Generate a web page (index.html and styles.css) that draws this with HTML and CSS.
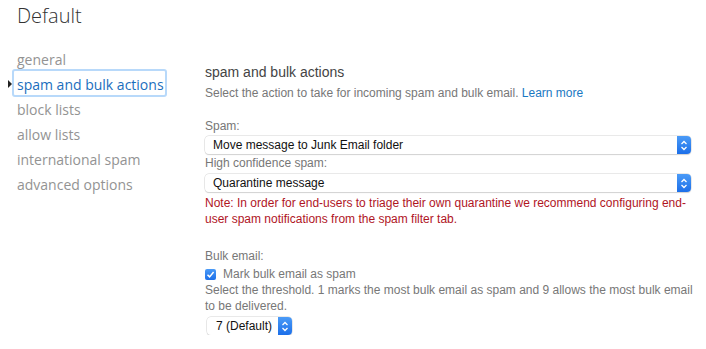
FILE: index.html
```html
<!DOCTYPE html>
<html>
<head>
<meta charset="utf-8">
<link rel="stylesheet" href="styles.css">
</head>
<body>
<div class="page">
  <h1 class="title">Default</h1>
  <div class="layout">
    <nav class="nav">
      <div class="nav-item">general</div>
      <div class="nav-item active">spam and bulk actions</div>
      <div class="nav-item">block lists</div>
      <div class="nav-item">allow lists</div>
      <div class="nav-item">international spam</div>
      <div class="nav-item">advanced options</div>
    </nav>
    <main class="content">
      <h2 class="heading">spam and bulk actions</h2>
      <p class="desc">Select the action to take for incoming spam and bulk email. <a class="link">Learn more</a></p>

      <div class="label first">Spam:</div>
      <div class="select wide"><span>Move message to Junk Email folder</span><span class="chev"><svg width="8" height="11" viewBox="0 0 8 11"><path d="M1.5 4 L4 1.5 L6.5 4 M1.5 7 L4 9.5 L6.5 7" fill="none" stroke="#fff" stroke-width="1.3"/></svg></span></div>
      <div class="label hc">High confidence spam:</div>
      <div class="select wide"><span>Quarantine message</span><span class="chev"><svg width="8" height="11" viewBox="0 0 8 11"><path d="M1.5 4 L4 1.5 L6.5 4 M1.5 7 L4 9.5 L6.5 7" fill="none" stroke="#fff" stroke-width="1.3"/></svg></span></div>
      <p class="note">Note: In order for end-users to triage their own quarantine we recommend configuring end-user spam notifications from the spam filter tab.</p>

      <div class="label bulk">Bulk email:</div>
      <div class="check-row"><span class="checkbox"><svg width="11" height="11" viewBox="0 0 11 11"><path d="M2.5 5.8 L4.6 7.9 L8.6 3" fill="none" stroke="#fff" stroke-width="1.5"/></svg></span><span class="check-label">Mark bulk email as spam</span></div>
      <p class="thresh">Select the threshold. 1 marks the most bulk email as spam and 9 allows the most bulk email to be delivered.</p>
      <div class="select small"><span>7 (Default)</span><span class="chev"><svg width="8" height="11" viewBox="0 0 8 11"><path d="M1.5 4 L4 1.5 L6.5 4 M1.5 7 L4 9.5 L6.5 7" fill="none" stroke="#fff" stroke-width="1.3"/></svg></span></div>
    </main>
  </div>
</div>
</body>
</html>
```
FILE: styles.css
```css
html, body { margin: 0; padding: 0; background: #fff; }
.page { padding: 0 0 0 17px; }
.title {
  margin: 0;
  padding-top: 2px;
  font-family: "Open Sans", sans-serif;
  font-weight: 300;
  font-size: 20px;
  line-height: 28px;
  color: #333;
}
.layout { display: flex; margin-top: 17px; }
.nav { width: 188px; flex: none; }
.nav-item {
  position: relative;
  font-family: "Open Sans", sans-serif;
  font-size: 14px;
  line-height: 25px;
  color: #939393;
  white-space: nowrap;
}
.nav-item.active { color: #1a6ebd; }
.nav-item.active::before {
  content: "";
  position: absolute;
  left: -5px; top: -3px;
  width: 151px; height: 24px;
  border: 2px solid #b8d9fa;
  border-radius: 3px;
}
.nav-item.active::after {
  content: "";
  position: absolute;
  left: -9px; top: 8px;
  border-left: 4px solid #222;
  border-top: 4px solid transparent;
  border-bottom: 4px solid transparent;
}
.content {
  flex: 1;
  padding-right: 4px;
  font-family: "Liberation Sans", sans-serif;
  font-size: 12px;
  color: #777;
}
.heading {
  margin: 15px 0 0 0;
  font-family: "Liberation Sans", sans-serif;
  font-weight: 400;
  font-size: 14px;
  line-height: 20px;
  color: #444;
}
.desc { margin: 3px 0 0 0; line-height: 16px; }
.link { color: #1a78c2; }
.label { line-height: 16px; }
.label.first { margin-top: 17px; }
.label + .select { margin-top: 2px; }
.label.hc { margin-top: 1px; }
.label.hc + .select { margin-top: 3px; }
.select {
  display: flex;
  align-items: center;
  justify-content: space-between;
  box-sizing: border-box;
  height: 18px;
  background: #fff;
  border-radius: 4px;
  box-shadow: 0 0 0 0.5px #d4d4d4, 0 1px 1px rgba(0,0,0,0.18);
  color: #111;
  font-size: 12px;
  padding-left: 8px;
  overflow: hidden;
}
.select.wide { width: 486px; }
.select.small { width: 85px; margin: 3px 0 0 2px; padding-left: 9px; }
.chev {
  width: 14px; height: 18px;
  display: flex; align-items: center; justify-content: center;
  background: linear-gradient(#4b9bf7, #1c6fe9);
}
.note {
  margin: 3px 0 0 0;
  max-width: 490px;
  color: #b0151f;
  line-height: 16px;
}
.label.bulk { margin-top: 21px; }
.check-row { display: flex; align-items: center; margin-top: 2px; height: 16px; }
.checkbox {
  width: 11px; height: 11px;
  border-radius: 2px;
  background: linear-gradient(#4b9bf7, #1c6fe9);
  display: flex;
}
.check-label { margin-left: 7px; line-height: 16px; }
.thresh { margin: 0; line-height: 16px; }
```
